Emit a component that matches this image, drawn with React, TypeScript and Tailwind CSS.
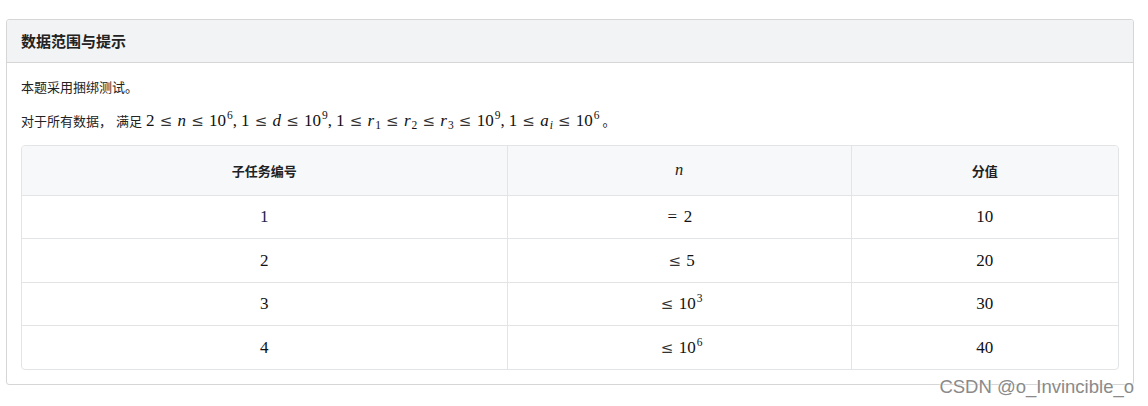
import React from "react";

const cjk = { fontFamily: '"Noto Sans CJK SC", "Liberation Sans", sans-serif' };
const tex = { fontFamily: '"Liberation Serif", "DejaVu Serif", serif' };

function Le() {
  return (
    <span className="mx-[5px] inline-block w-[13px] text-center text-[#333]" style={{ fontFamily: '"DejaVu Serif", serif', fontSize: "15px" }}>
      ≤
    </span>
  );
}

function V({ children }: { children: React.ReactNode }) {
  return <i className="italic">{children}</i>;
}

function Pow({ base, exp }: { base: string; exp: string }) {
  return (
    <span>
      {base}
      <span className="relative -top-[7px] ml-[1px] text-[11.5px]">{exp}</span>
    </span>
  );
}

function Sub({ v, s }: { v: string; s: string }) {
  return (
    <span>
      <V>{v}</V>
      <span className={`relative top-[3px] ml-[1px] text-[11.5px] ${s === "i" ? "italic" : ""}`}>{s}</span>
    </span>
  );
}

function Comma() {
  return <span className="mr-[4px]">,</span>;
}

const rows = [
  { id: "1", n: <><span className="mr-[5px] inline-block w-[13px] text-center">=</span>2</>, score: "10" },
  { id: "2", n: <><Le />5</>, score: "20" },
  { id: "3", n: <><Le /><Pow base="10" exp="3" /></>, score: "30" },
  { id: "4", n: <><Le /><Pow base="10" exp="6" /></>, score: "40" },
];

export default function App() {
  return (
    <div className="relative h-[406px] w-[1148px] bg-white pl-[6px] pt-[19px]" style={cjk}>
      <div className="w-[1128px] rounded-[3px] border border-[#d6d6d6] bg-white">
        <div className="flex h-[43px] items-center rounded-t-[3px] border-b border-[#d6d6d6] bg-[#f2f3f5] px-[14px] text-[15px] font-bold text-[#222]">
          数据范围与提示
        </div>
        <div className="px-[14px] pb-[14px] pt-[14px] text-[13px] text-[#222]">
          <p className="leading-[20px]">本题采用捆绑测试。</p>
          <p className="mt-[12px] flex h-[24px] items-center whitespace-nowrap">
            <span>对于所有数据，</span>
            <span className="ml-[4px]">满足</span>
            <span className="ml-[4px] text-[17px] text-[#111]" style={tex}>
              2<Le /><V>n</V><Le /><Pow base="10" exp="6" /><Comma />
              1<Le /><V>d</V><Le /><Pow base="10" exp="9" /><Comma />
              1<Le /><Sub v="r" s="1" /><Le /><Sub v="r" s="2" /><Le /><Sub v="r" s="3" /><Le />
              <Pow base="10" exp="9" /><Comma />
              1<Le /><Sub v="a" s="i" /><Le /><Pow base="10" exp="6" />
            </span>
            <span className="ml-[3px]">。</span>
          </p>
          <div className="mt-[12px] overflow-hidden rounded-[4px] border border-[#e3e4e6]">
            <table className="w-full table-fixed border-collapse">
              <colgroup>
                <col className="w-[485px]" />
                <col className="w-[344px]" />
                <col />
              </colgroup>
              <thead>
                <tr className="h-[49px] bg-[#f7f8fa] text-[13px] font-bold text-[#222]">
                  <th className="border-r border-[#e3e4e6]">子任务编号</th>
                  <th className="border-r border-[#e3e4e6] text-[16.5px] font-normal" style={tex}>
                    <i>n</i>
                  </th>
                  <th>分值</th>
                </tr>
              </thead>
              <tbody className="text-[17px] text-[#111]" style={tex}>
                {rows.map((r) => (
                  <tr key={r.id} className="h-[43.5px] border-t border-[#e3e4e6] text-center">
                    <td className={`border-r border-[#e3e4e6] ${r.id === "1" ? "text-[#22224a]" : ""}`}>{r.id}</td>
                    <td className="border-r border-[#e3e4e6]">{r.n}</td>
                    <td>{r.score}</td>
                  </tr>
                ))}
              </tbody>
            </table>
          </div>
        </div>
      </div>
      <div
        className="absolute right-[14px] top-[373px] text-[18.5px] text-[#8a8a8a]"
        style={{ fontFamily: '"Liberation Sans", Arial, sans-serif', textShadow: "0 0 2px #fff, 0 0 2px #fff" }}
      >
        CSDN @o_Invincible_o
      </div>
    </div>
  );
}
